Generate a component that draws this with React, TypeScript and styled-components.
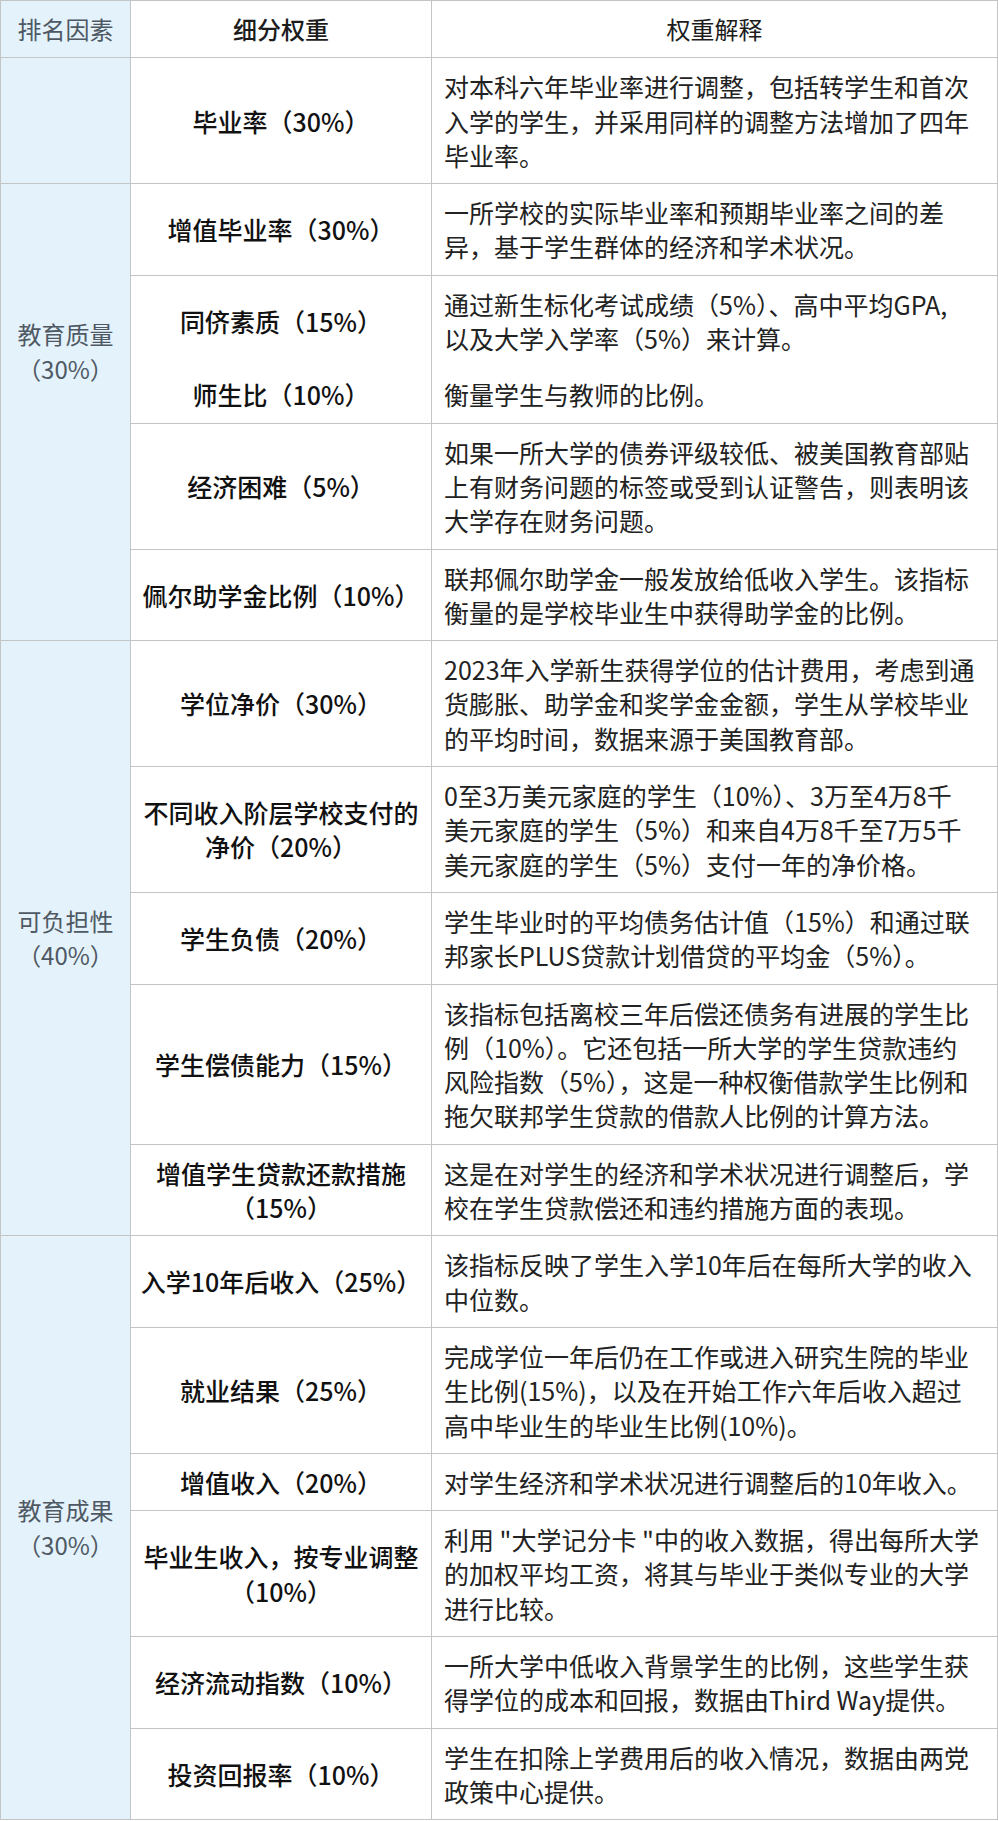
import React from 'react';
import styled, { createGlobalStyle } from 'styled-components';

const GlobalStyle = createGlobalStyle`
  html, body {
    margin: 0;
    padding: 0;
    background: #fff;
  }
  body {
    font-family: "Noto Sans CJK SC", "Noto Sans", sans-serif;
    -webkit-font-smoothing: antialiased;
  }
`;

const Table = styled.table`
  width: 997px;
  border-collapse: separate;
  border-spacing: 0;
  table-layout: fixed;
  border-top: 1px solid #c4c4c4;
  border-left: 1px solid #c4c4c4;
  font-size: 25px;
  line-height: 34.3px;
  color: #1c1c1c;
`;

const Col = styled.col<{ $w: number }>`
  width: ${p => p.$w}px;
`;

const Cell = styled.td<{ $joined?: boolean }>`
  border-right: 1px solid #c4c4c4;
  border-bottom: ${p => (p.$joined ? 'none' : '1px solid #c4c4c4')};
  padding: 11px 12px;
  vertical-align: middle;
  white-space: pre-line;
`;

const HeadCell = styled.th<{ $tint?: boolean; $bold?: boolean }>`
  border-right: 1px solid #c4c4c4;
  border-bottom: 1px solid #c4c4c4;
  padding: 11px 8px;
  text-align: center;
  font-size: 24px;
  font-weight: ${p => (p.$bold ? 500 : 400)};
  background: ${p => (p.$tint ? '#e4f2fb' : '#fff')};
  color: ${p => (p.$tint ? '#4f5964' : '#1c1c1c')};
`;

const GroupCell = styled(Cell)<{ $lift?: number }>`
  background: #e4f2fb;
  color: #4f5964;
  text-align: center;
  font-size: 24px;
  padding: 11px 4px ${p => 11 + (p.$lift ?? 0)}px;
`;

const FactorCell = styled(Cell)`
  text-align: center;
  font-weight: 500;
  color: #111;
  padding-left: 6px;
  padding-right: 6px;
`;

const DescCell = styled(Cell)`
  text-align: left;
  color: #222;
`;

type Item = { factor: string; desc: string; joinNext?: boolean };
type Group = { name: string; lift?: number; items: Item[] };

const groups: Group[] = [
  {
    name: '',
    items: [
      {
        factor: '毕业率（30%）',
        desc: '对本科六年毕业率进行调整，包括转学生和首次\n入学的学生，并采用同样的调整方法增加了四年\n毕业率。',
      },
    ],
  },
  {
    name: '教育质量\n（30%）',
    lift: 121,
    items: [
      {
        factor: '增值毕业率（30%）',
        desc: '一所学校的实际毕业率和预期毕业率之间的差\n异，基于学生群体的经济和学术状况。',
      },
      {
        factor: '同侪素质（15%）',
        desc: '通过新生标化考试成绩（5%）、高中平均GPA,\n以及大学入学率（5%）来计算。',
        joinNext: true,
      },
      { factor: '师生比（10%）', desc: '衡量学生与教师的比例。' },
      {
        factor: '经济困难（5%）',
        desc: '如果一所大学的债券评级较低、被美国教育部贴\n上有财务问题的标签或受到认证警告，则表明该\n大学存在财务问题。',
      },
      {
        factor: '佩尔助学金比例（10%）',
        desc: '联邦佩尔助学金一般发放给低收入学生。该指标\n衡量的是学校毕业生中获得助学金的比例。',
      },
    ],
  },
  {
    name: '可负担性\n（40%）',
    items: [
      {
        factor: '学位净价（30%）',
        desc: '2023年入学新生获得学位的估计费用，考虑到通\n货膨胀、助学金和奖学金金额，学生从学校毕业\n的平均时间，数据来源于美国教育部。',
      },
      {
        factor: '不同收入阶层学校支付的\n净价（20%）',
        desc: '0至3万美元家庭的学生（10%）、3万至4万8千\n美元家庭的学生（5%）和来自4万8千至7万5千\n美元家庭的学生（5%）支付一年的净价格。',
      },
      {
        factor: '学生负债（20%）',
        desc: '学生毕业时的平均债务估计值（15%）和通过联\n邦家长PLUS贷款计划借贷的平均金（5%）。',
      },
      {
        factor: '学生偿债能力（15%）',
        desc: '该指标包括离校三年后偿还债务有进展的学生比\n例（10%）。它还包括一所大学的学生贷款违约\n风险指数（5%），这是一种权衡借款学生比例和\n拖欠联邦学生贷款的借款人比例的计算方法。',
      },
      {
        factor: '增值学生贷款还款措施\n（15%）',
        desc: '这是在对学生的经济和学术状况进行调整后，学\n校在学生贷款偿还和违约措施方面的表现。',
      },
    ],
  },
  {
    name: '教育成果\n（30%）',
    items: [
      {
        factor: '入学10年后收入（25%）',
        desc: '该指标反映了学生入学10年后在每所大学的收入\n中位数。',
      },
      {
        factor: '就业结果（25%）',
        desc: '完成学位一年后仍在工作或进入研究生院的毕业\n生比例(15%)，以及在开始工作六年后收入超过\n高中毕业生的毕业生比例(10%)。',
      },
      { factor: '增值收入（20%）', desc: '对学生经济和学术状况进行调整后的10年收入。' },
      {
        factor: '毕业生收入，按专业调整\n（10%）',
        desc: '利用 "大学记分卡 "中的收入数据，得出每所大学\n的加权平均工资，将其与毕业于类似专业的大学\n进行比较。',
      },
      {
        factor: '经济流动指数（10%）',
        desc: '一所大学中低收入背景学生的比例，这些学生获\n得学位的成本和回报，数据由Third Way提供。',
      },
      {
        factor: '投资回报率（10%）',
        desc: '学生在扣除上学费用后的收入情况，数据由两党\n政策中心提供。',
      },
    ],
  },
];

export default function App() {
  return (
    <>
      <GlobalStyle />
      <Table>
        <colgroup>
          <Col $w={130} />
          <Col $w={301} />
          <Col $w={566} />
        </colgroup>
        <thead>
          <tr>
            <HeadCell $tint>排名因素</HeadCell>
            <HeadCell $bold>细分权重</HeadCell>
            <HeadCell>权重解释</HeadCell>
          </tr>
        </thead>
        <tbody>
          {groups.map(g =>
            g.items.map((item, i) => (
              <tr key={item.factor}>
                {i === 0 && (
                  <GroupCell rowSpan={g.items.length} $lift={g.lift}>
                    {g.name}
                  </GroupCell>
                )}
                <FactorCell $joined={item.joinNext}>{item.factor}</FactorCell>
                <DescCell $joined={item.joinNext}>{item.desc}</DescCell>
              </tr>
            ))
          )}
        </tbody>
      </Table>
    </>
  );
}
